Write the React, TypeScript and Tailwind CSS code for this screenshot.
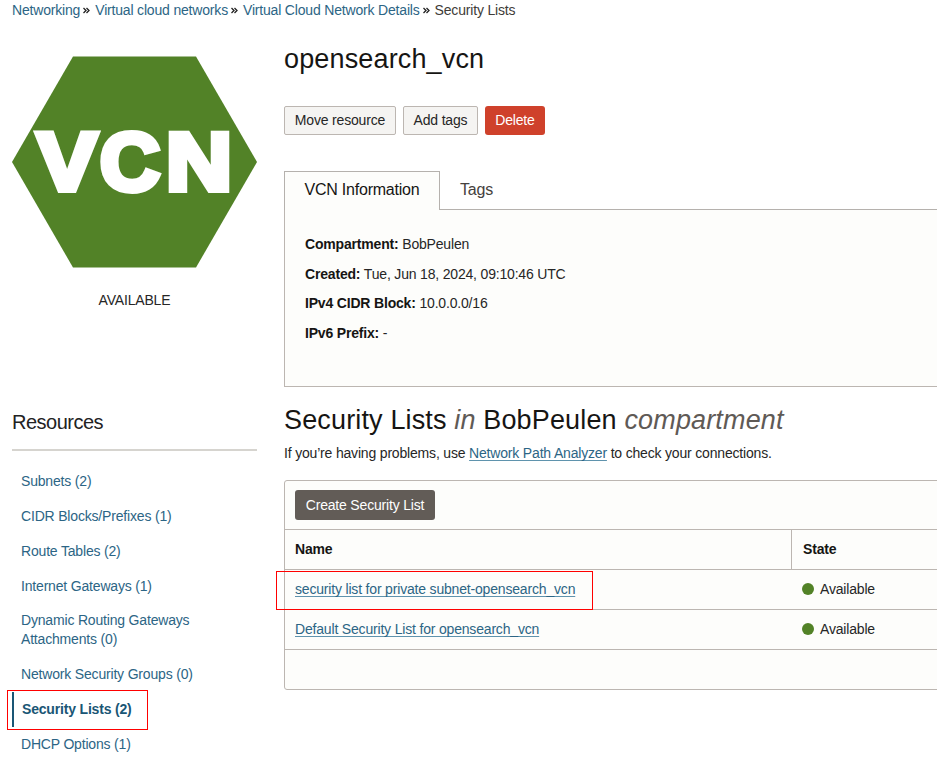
import React from "react";

const link = "text-[#2c6585]";
const underlined = "text-[#2c6585] underline decoration-[#5f93ad] decoration-1 underline-offset-[2px] [text-decoration-skip-ink:none]";

const crumbs = ["Networking", "Virtual cloud networks", "Virtual Cloud Network Details"];

const resources = [
  { label: "Subnets (2)" },
  { label: "CIDR Blocks/Prefixes (1)" },
  { label: "Route Tables (2)" },
  { label: "Internet Gateways (1)" },
  { label: "Dynamic Routing Gateways Attachments (0)" },
  { label: "Network Security Groups (0)" },
  { label: "Security Lists (2)", active: true },
  { label: "DHCP Options (1)" },
];

const details = [
  ["Compartment:", "BobPeulen"],
  ["Created:", "Tue, Jun 18, 2024, 09:10:46 UTC"],
  ["IPv4 CIDR Block:", "10.0.0.0/16"],
  ["IPv6 Prefix:", "-"],
];

function Chevrons() {
  return (
    <svg width="7" height="7" viewBox="0 0 7 7" className="ml-[3px] mr-[5px] mt-px shrink-0" fill="none" stroke="#222" strokeWidth="1.3">
      <path d="M0.5 1L3 3.5L0.5 6M3.5 1L6 3.5L3.5 6" />
    </svg>
  );
}

function VcnLogo() {
  return (
    <svg width="245" height="212" viewBox="0 0 245 212" className="block">
      <polygon points="61,0.5 184,0.5 245,106 184,211.5 61,211.5 0,106" fill="#528227" />
      <g fill="#fff" stroke="#fff" strokeWidth="6" className="font-['Liberation_Sans',Arial,sans-serif] text-[81.4px] font-bold tracking-normal">
        <text x="25" y="134" textLength="60" lengthAdjust="spacingAndGlyphs">V</text>
        <text x="88" y="134" textLength="60" lengthAdjust="spacingAndGlyphs">C</text>
        <text x="154" y="134" textLength="66" lengthAdjust="spacingAndGlyphs">N</text>
      </g>
    </svg>
  );
}

function ListRow({ name, boxed }: { name: string; boxed?: boolean }) {
  return (
    <div className="flex h-10 border-b border-[#bcb6b1]">
      <div className="relative flex w-[507px] items-center pl-[10px]">
        <a className={underlined}>{name}</a>
        {boxed && <div className="absolute -left-[9px] top-px h-[39px] w-[317px] border border-[#f00]" />}
      </div>
      <div className="flex items-center pl-[10px]">
        <span className="mb-[2px] mr-[6px] size-[12px] rounded-full bg-[#528227]" />
        <span>Available</span>
      </div>
    </div>
  );
}

export default function App() {
  return (
    <div className="h-[757px] w-[937px] overflow-hidden bg-white font-['Liberation_Sans',Arial,sans-serif] text-[14px] leading-[19px] tracking-[-0.18px] text-[#262626]">
      <nav className="flex h-[20px] items-center pl-3">
        {crumbs.map((c) => (
          <React.Fragment key={c}>
            <a className={link}>{c}</a>
            <Chevrons />
          </React.Fragment>
        ))}
        <span className="text-[#403c38]">Security Lists</span>
      </nav>

      <div className="flex pl-3">
        <aside className="w-[245px] shrink-0 pt-[36px]">
          <VcnLogo />
          <div className="mt-[23px] text-center">AVAILABLE</div>
          <h2 className="mt-[100px] box-content h-[39px] border-b-2 border-[#d6d4cf] text-[20px] leading-[24px] tracking-[-0.5px] text-[#222]">Resources</h2>
          <ul className="pt-[13px]">
            {resources.map((r) =>
              r.active ? (
                <li key={r.label} className="relative flex h-[35px] items-center border-l-2 border-[#1a5675] pl-[8px] font-bold text-[#1a5675]">
                  {r.label}
                  <div className="absolute -left-[9px] -top-[2.6px] ml-[2px] h-[40px] w-[141px] border border-[#f00]" />
                </li>
              ) : (
                <li key={r.label} className={`${link} w-[200px] py-[7.95px] pl-[9px]`}>
                  {r.label}
                </li>
              )
            )}
          </ul>
        </aside>

        <main className="ml-[27px] w-[653px] shrink-0 pt-[22px]">
          <h1 className="text-[27px] leading-[34px] tracking-[0.15px] text-[#161513]">opensearch_vcn</h1>
          <div className="mt-[30px] flex">
            <button className="h-[29px] w-[112px] rounded-[2px] border border-[#bcb6b1] bg-[#f5f4f2]">Move resource</button>
            <button className="ml-[7px] h-[29px] w-[75px] rounded-[2px] border border-[#bcb6b1] bg-[#f5f4f2]">Add tags</button>
            <button className="ml-[7px] h-[29px] w-[60px] rounded-[3px] bg-[#cf412b] text-white">Delete</button>
          </div>

          <div className="mt-[36px] flex h-[39px] text-[16px] tracking-[-0.22px]">
            <div className="flex w-[156px] items-center border-l border-r border-t border-[#b5b1ad] bg-[#fdfdfb] pb-[3px] pl-[19.5px] text-[#161513]">VCN Information</div>
            <div className="flex flex-1 items-center border-b border-[#b5b1ad] pb-[2px] pl-5 text-[#45413d]">Tags</div>
          </div>
          <div className="flex h-[177px] flex-col gap-[10.5px] border-b border-l border-[#bcb6b1] bg-[#fdfdfb] pl-5 pt-[25px]">
            {details.map(([k, v]) => (
              <div key={k}>
                <b className="text-[#161513]">{k}</b> {v}
              </div>
            ))}
          </div>

          <h2 className="mt-[16px] whitespace-nowrap text-[27px] leading-[34px] tracking-[0.15px] text-[#161513]">
            Security Lists <i className="text-[#5f5a56]">in</i> BobPeulen <i className="text-[#5f5a56]">compartment</i>
          </h2>
          <p className="mt-[7px]">
            If you’re having problems, use <a className={underlined}>Network Path Analyzer</a> to check your connections.
          </p>

          <section className="mt-[17px] h-[210px] w-[670px] rounded-[3px] border border-[#bcb6b1] bg-[#fdfdfb]">
            <div className="flex h-[49px] items-center border-b border-[#bcb6b1] pl-[10px]">
              <button className="h-[30px] w-[140px] rounded-[3px] bg-[#625c57] text-white">Create Security List</button>
            </div>
            <div className="flex h-10 border-b border-[#bcb6b1] font-bold text-[#161513]">
              <div className="flex w-[507px] items-center border-r border-[#bcb6b1] pl-[10px]">Name</div>
              <div className="flex items-center pl-[11px]">State</div>
            </div>
            <ListRow name="security list for private subnet-opensearch_vcn" boxed />
            <ListRow name="Default Security List for opensearch_vcn" />
          </section>
        </main>
      </div>
    </div>
  );
}
